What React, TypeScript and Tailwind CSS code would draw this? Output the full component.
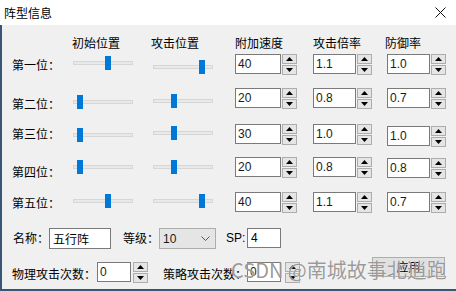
import React from "react";

const cjk = { fontFamily: '"Noto Sans CJK SC", "Liberation Sans", sans-serif' };
const latin = { fontFamily: '"Liberation Sans", "Noto Sans CJK SC", sans-serif' };

type RowData = {
  label: string;
  s1: number;
  s2: number;
  vals: [string, string, string];
  lab: number;
  sl1: number;
  sl2: number;
  sp3: number;
  h: number;
};

const rows: RowData[] = [
  { label: "第一位：", s1: 32, s2: 46, vals: ["40", "1.1", "1.0"], lab: 4, sl1: 2, sl2: 6, sp3: 0, h: 34 },
  { label: "第二位：", s1: 4, s2: 18, vals: ["20", "0.8", "0.7"], lab: 9, sl1: 7, sl2: 6, sp3: 0, h: 36 },
  { label: "第三位：", s1: 4, s2: 18, vals: ["30", "1.0", "1.0"], lab: 3, sl1: 4, sl2: 2, sp3: 2, h: 33 },
  { label: "第四位：", s1: 4, s2: 18, vals: ["20", "0.8", "0.8"], lab: 8, sl1: 3, sl2: 3, sp3: 1, h: 35 },
  { label: "第五位：", s1: 32, s2: 46, vals: ["40", "1.1", "0.7"], lab: 4, sl1: 2, sl2: 2, sp3: 0, h: 21 },
];

function Slider({ pos, top }: { pos: number; top: number }) {
  return (
    <div className="relative w-[60px] h-[14px] shrink-0" style={{ marginTop: top }}>
      <div className="absolute left-0 top-[5px] w-[60px] h-[4px] border border-[#d6d6d6] bg-[#e7eaea]" />
      <div className="absolute top-0 w-[6px] h-[14px] bg-[#0078d7]" style={{ left: pos }} />
    </div>
  );
}

function Arrow({ up }: { up?: boolean }) {
  return (
    <svg width="7" height="4" viewBox="0 0 7 4">
      {up ? <path d="M0 4 L3.5 0 L7 4 Z" fill="#000" /> : <path d="M0 0 L3.5 4 L7 0 Z" fill="#000" />}
    </svg>
  );
}

function SpinButtons() {
  return (
    <div className="flex flex-col gap-[1px] w-[15px] shrink-0">
      <div className="h-[10px] border border-[#adadad] bg-[#e5e5e5] flex items-center justify-center">
        <Arrow up />
      </div>
      <div className="h-[10px] border border-[#adadad] bg-[#e5e5e5] flex items-center justify-center">
        <Arrow />
      </div>
    </div>
  );
}

function Spin({ value, w, top = 0, gap = 1 }: { value: string; w: number; top?: number; gap?: number }) {
  return (
    <div className="flex shrink-0" style={{ marginTop: top, gap }}>
      <div
        className="h-[20px] border border-[#7a7a7a] bg-white pl-[2px] flex items-center text-[12px] text-[#1a1a1a]"
        style={{ ...latin, width: w }}
      >
        {value}
      </div>
      <SpinButtons />
    </div>
  );
}

export default function App() {
  return (
    <div className="w-[456px] h-[291px] flex flex-col overflow-hidden bg-white text-black" style={cjk}>
      <div className="h-[25px] bg-white flex items-center justify-between pl-[4px] pr-[10px] shrink-0">
        <span className="text-[12px] leading-[14px]">阵型信息</span>
        <svg width="11" height="11" viewBox="0 0 11 11">
          <path d="M0.5 0.5 L10.5 10.5 M10.5 0.5 L0.5 10.5" stroke="#111" strokeWidth="1" />
        </svg>
      </div>

      <div className="relative flex-1 flex flex-col bg-[#f0f0f0] border-l-2 border-b-2 border-[#3a5676]">
        <div className="flex mt-[11px] h-[14px] text-[12px] leading-[14px]">
          <div className="w-[70px]" />
          <div className="w-[79px]">初始位置</div>
          <div className="w-[84px]">攻击位置</div>
          <div className="w-[78px]">附加速度</div>
          <div className="w-[72px]">攻击倍率</div>
          <div>防御率</div>
        </div>

        <div className="flex flex-col mt-[4px]">
          {rows.map((r) => (
            <div key={r.label} className="flex items-start" style={{ height: r.h }}>
              <div className="ml-[10px] w-[61px] text-[12px] leading-[14px] shrink-0" style={{ marginTop: r.lab }}>
                {r.label}
              </div>
              <Slider pos={r.s1} top={r.sl1} />
              <div className="w-[20px] shrink-0" />
              <Slider pos={r.s2} top={r.sl2} />
              <div className="w-[22px] shrink-0" />
              <Spin value={r.vals[0]} w={46} />
              <div className="w-[16px] shrink-0" />
              <Spin value={r.vals[1]} w={43} />
              <div className="w-[15px] shrink-0" />
              <Spin value={r.vals[2]} w={43} top={r.sp3} />
            </div>
          ))}
        </div>

        <div className="flex items-start mt-[15px] h-[21px] text-[12px] leading-[14px]">
          <div className="ml-[11px] w-[36px] mt-[3px]">名称：</div>
          <div className="w-[62px] h-[21px] border border-[#7a7a7a] bg-white pl-[3px] flex items-center">五行阵</div>
          <div className="ml-[12px] w-[36px] mt-[3px]">等级：</div>
          <div
            className="w-[57px] h-[21px] border border-[#adadad] bg-[#e5e5e5] pl-[3px] pr-[5px] flex items-center justify-between"
            style={latin}
          >
            <span className="text-[#1a1a1a]">10</span>
            <svg width="9" height="5" viewBox="0 0 9 5">
              <path d="M0.5 0.5 L4.5 4.5 L8.5 0.5" stroke="#555" fill="none" />
            </svg>
          </div>
          <div className="ml-[10px] w-[21px] mt-[3px]" style={latin}>
            SP:
          </div>
          <div
            className="w-[34px] h-[20px] border border-[#7a7a7a] bg-white pl-[3px] flex items-center"
            style={latin}
          >
            4
          </div>
        </div>

        <div className="flex items-start mt-[8px] h-[21px] text-[12px] leading-[14px]">
          <div className="ml-[10px] w-[85px] mt-[10px]">物理攻击次数：</div>
          <Spin value="0" w={34} top={5} gap={2} />
          <div className="ml-[15px] w-[84px] mt-[10px]">策略攻击次数：</div>
          <Spin value="0" w={34} top={5} gap={4} />
          <div className="ml-[72px] w-[73px] h-[20px] border border-[#adadad] bg-[#e1e1e1] flex items-center justify-center">
            应用
          </div>
        </div>

        <div
          className="absolute left-[229px] top-[233px] text-[20px] leading-[24px] text-[#6e6e6e]/70 whitespace-nowrap pointer-events-none"
          style={{ textShadow: "0 0 1px #fff" }}
        >
          CSDN @南城故事北逍跑
        </div>
      </div>
    </div>
  );
}
